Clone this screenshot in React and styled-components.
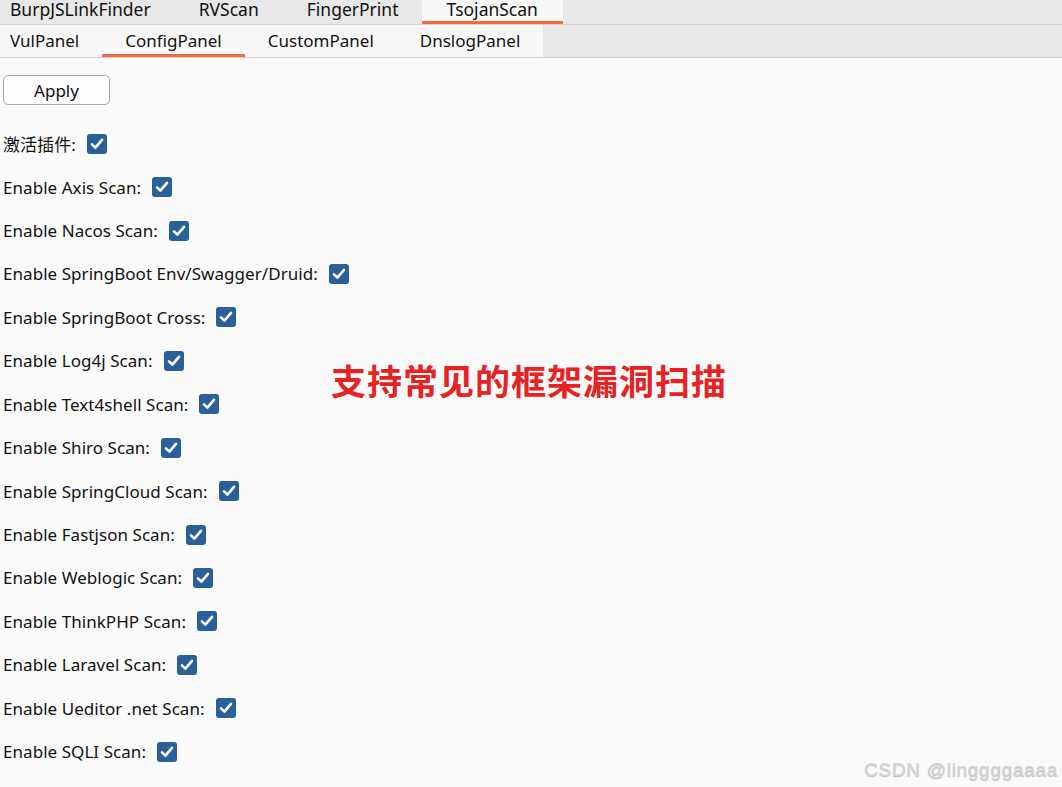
import React, { useState } from 'react';
import styled, { createGlobalStyle } from 'styled-components';

const GlobalStyle = createGlobalStyle`
  html, body {
    margin: 0;
    padding: 0;
    background: #fafafa;
  }
  body {
    font-family: "Noto Sans", "Noto Sans CJK SC", sans-serif;
    color: #111;
  }
`;

const Page = styled.div`
  position: relative;
  width: 1062px;
  height: 787px;
  overflow: hidden;
  background: #fafafa;
`;

const TabBar = styled.div`
  display: flex;
  height: ${p => p.height}px;
  background: #e8e8e8;
  border-bottom: 1px solid #d2d2d2;
`;

const TabGroup = styled.div`
  display: flex;
  background: ${p => p.bg || 'transparent'};
`;

const Tab = styled.div`
  display: flex;
  align-items: center;
  padding: 0 ${p => p.padR}px ${p => p.lift || 0}px ${p => p.padL}px;
  font-size: ${p => p.size || 17}px;
  line-height: 1.2;
  color: #111;
  background: ${p => (p.active ? '#f8f8f8' : 'transparent')};
  box-shadow: ${p => (p.active ? 'inset 0 -3px 0 #f26a3d' : 'none')};
  white-space: nowrap;
`;

const Content = styled.div`
  padding: 17px 3px 0 3px;
`;

const ApplyButton = styled.button`
  display: block;
  width: 107px;
  height: 30px;
  font-family: inherit;
  font-size: 17px;
  color: #111;
  background: #fdfdfd;
  border: 1px solid #a9a9a9;
  border-radius: 5px;
  padding: 0;
  margin-bottom: 17px;
`;

const Row = styled.label`
  display: flex;
  align-items: center;
  height: 43.43px;
  font-size: 17px;
  letter-spacing: 0.05px;
`;

const Box = styled.span`
  display: inline-flex;
  align-items: center;
  justify-content: center;
  width: 20px;
  height: 20px;
  margin-left: 11px;
  border-radius: 3px;
  background: ${p => (p.on ? '#2a6099' : '#fff')};
  border: ${p => (p.on ? 'none' : '1px solid #888')};
  box-sizing: border-box;
`;

const Annotation = styled.div`
  position: absolute;
  left: 331px;
  top: 354px;
  font-family: "Noto Sans CJK SC", sans-serif;
  font-weight: 700;
  font-size: 35px;
  letter-spacing: 1px;
  color: #e62222;
`;

const Watermark = styled.div`
  position: absolute;
  right: 4px;
  bottom: 6px;
  font-family: "Liberation Sans", Arial, sans-serif;
  font-size: 19px;
  letter-spacing: 0.7px;
  color: #d4d4d4;
  text-shadow: 0 1px 1px #bbb;
`;

const Check = ({ on, onClick }) => (
  <Box on={on} onClick={onClick}>
    {on && (
      <svg width="16" height="16" viewBox="0 0 16 16">
        <path d="M3 8.4 L6.4 11.6 L13 3.8" fill="none" stroke="#fff" strokeWidth="2.6" strokeLinecap="round" strokeLinejoin="round" />
      </svg>
    )}
  </Box>
);

const options = [
  '激活插件:',
  'Enable Axis Scan:',
  'Enable Nacos Scan:',
  'Enable SpringBoot Env/Swagger/Druid:',
  'Enable SpringBoot Cross:',
  'Enable Log4j Scan:',
  'Enable Text4shell Scan:',
  'Enable Shiro Scan:',
  'Enable SpringCloud Scan:',
  'Enable Fastjson Scan:',
  'Enable Weblogic Scan:',
  'Enable ThinkPHP Scan:',
  'Enable Laravel Scan:',
  'Enable Ueditor .net Scan:',
  'Enable SQLI Scan:',
];

export default function App() {
  const [checked, setChecked] = useState(options.map(() => true));

  const toggle = (i) => {
    setChecked(checked.map((c, j) => (j === i ? !c : c)));
  };

  return (
    <Page>
      <GlobalStyle />
      <TabBar height={24}>
        <Tab size={17.5} lift={6} padL={10} padR={24}>BurpJSLinkFinder</Tab>
        <Tab size={17.5} lift={6} padL={24} padR={24}>RVScan</Tab>
        <Tab size={17.5} lift={6} padL={24} padR={24}>FingerPrint</Tab>
        <Tab size={17.5} lift={6} padL={24} padR={25} active>TsojanScan</Tab>
      </TabBar>
      <TabBar height={32}>
        <TabGroup bg="#f8f8f8">
          <Tab padL={10} padR={23}>VulPanel</Tab>
          <Tab padL={23} padR={23} active>ConfigPanel</Tab>
          <Tab padL={23} padR={23}>CustomPanel</Tab>
          <Tab padL={23} padR={23}>DnslogPanel</Tab>
        </TabGroup>
      </TabBar>
      <Content>
        <ApplyButton>Apply</ApplyButton>
        {options.map((o, i) => (
          <Row key={o}>
            {o}
            <Check on={checked[i]} onClick={() => toggle(i)} />
          </Row>
        ))}
      </Content>
      <Annotation>支持常见的框架漏洞扫描</Annotation>
      <Watermark>CSDN @linggggaaaa</Watermark>
    </Page>
  );
}
